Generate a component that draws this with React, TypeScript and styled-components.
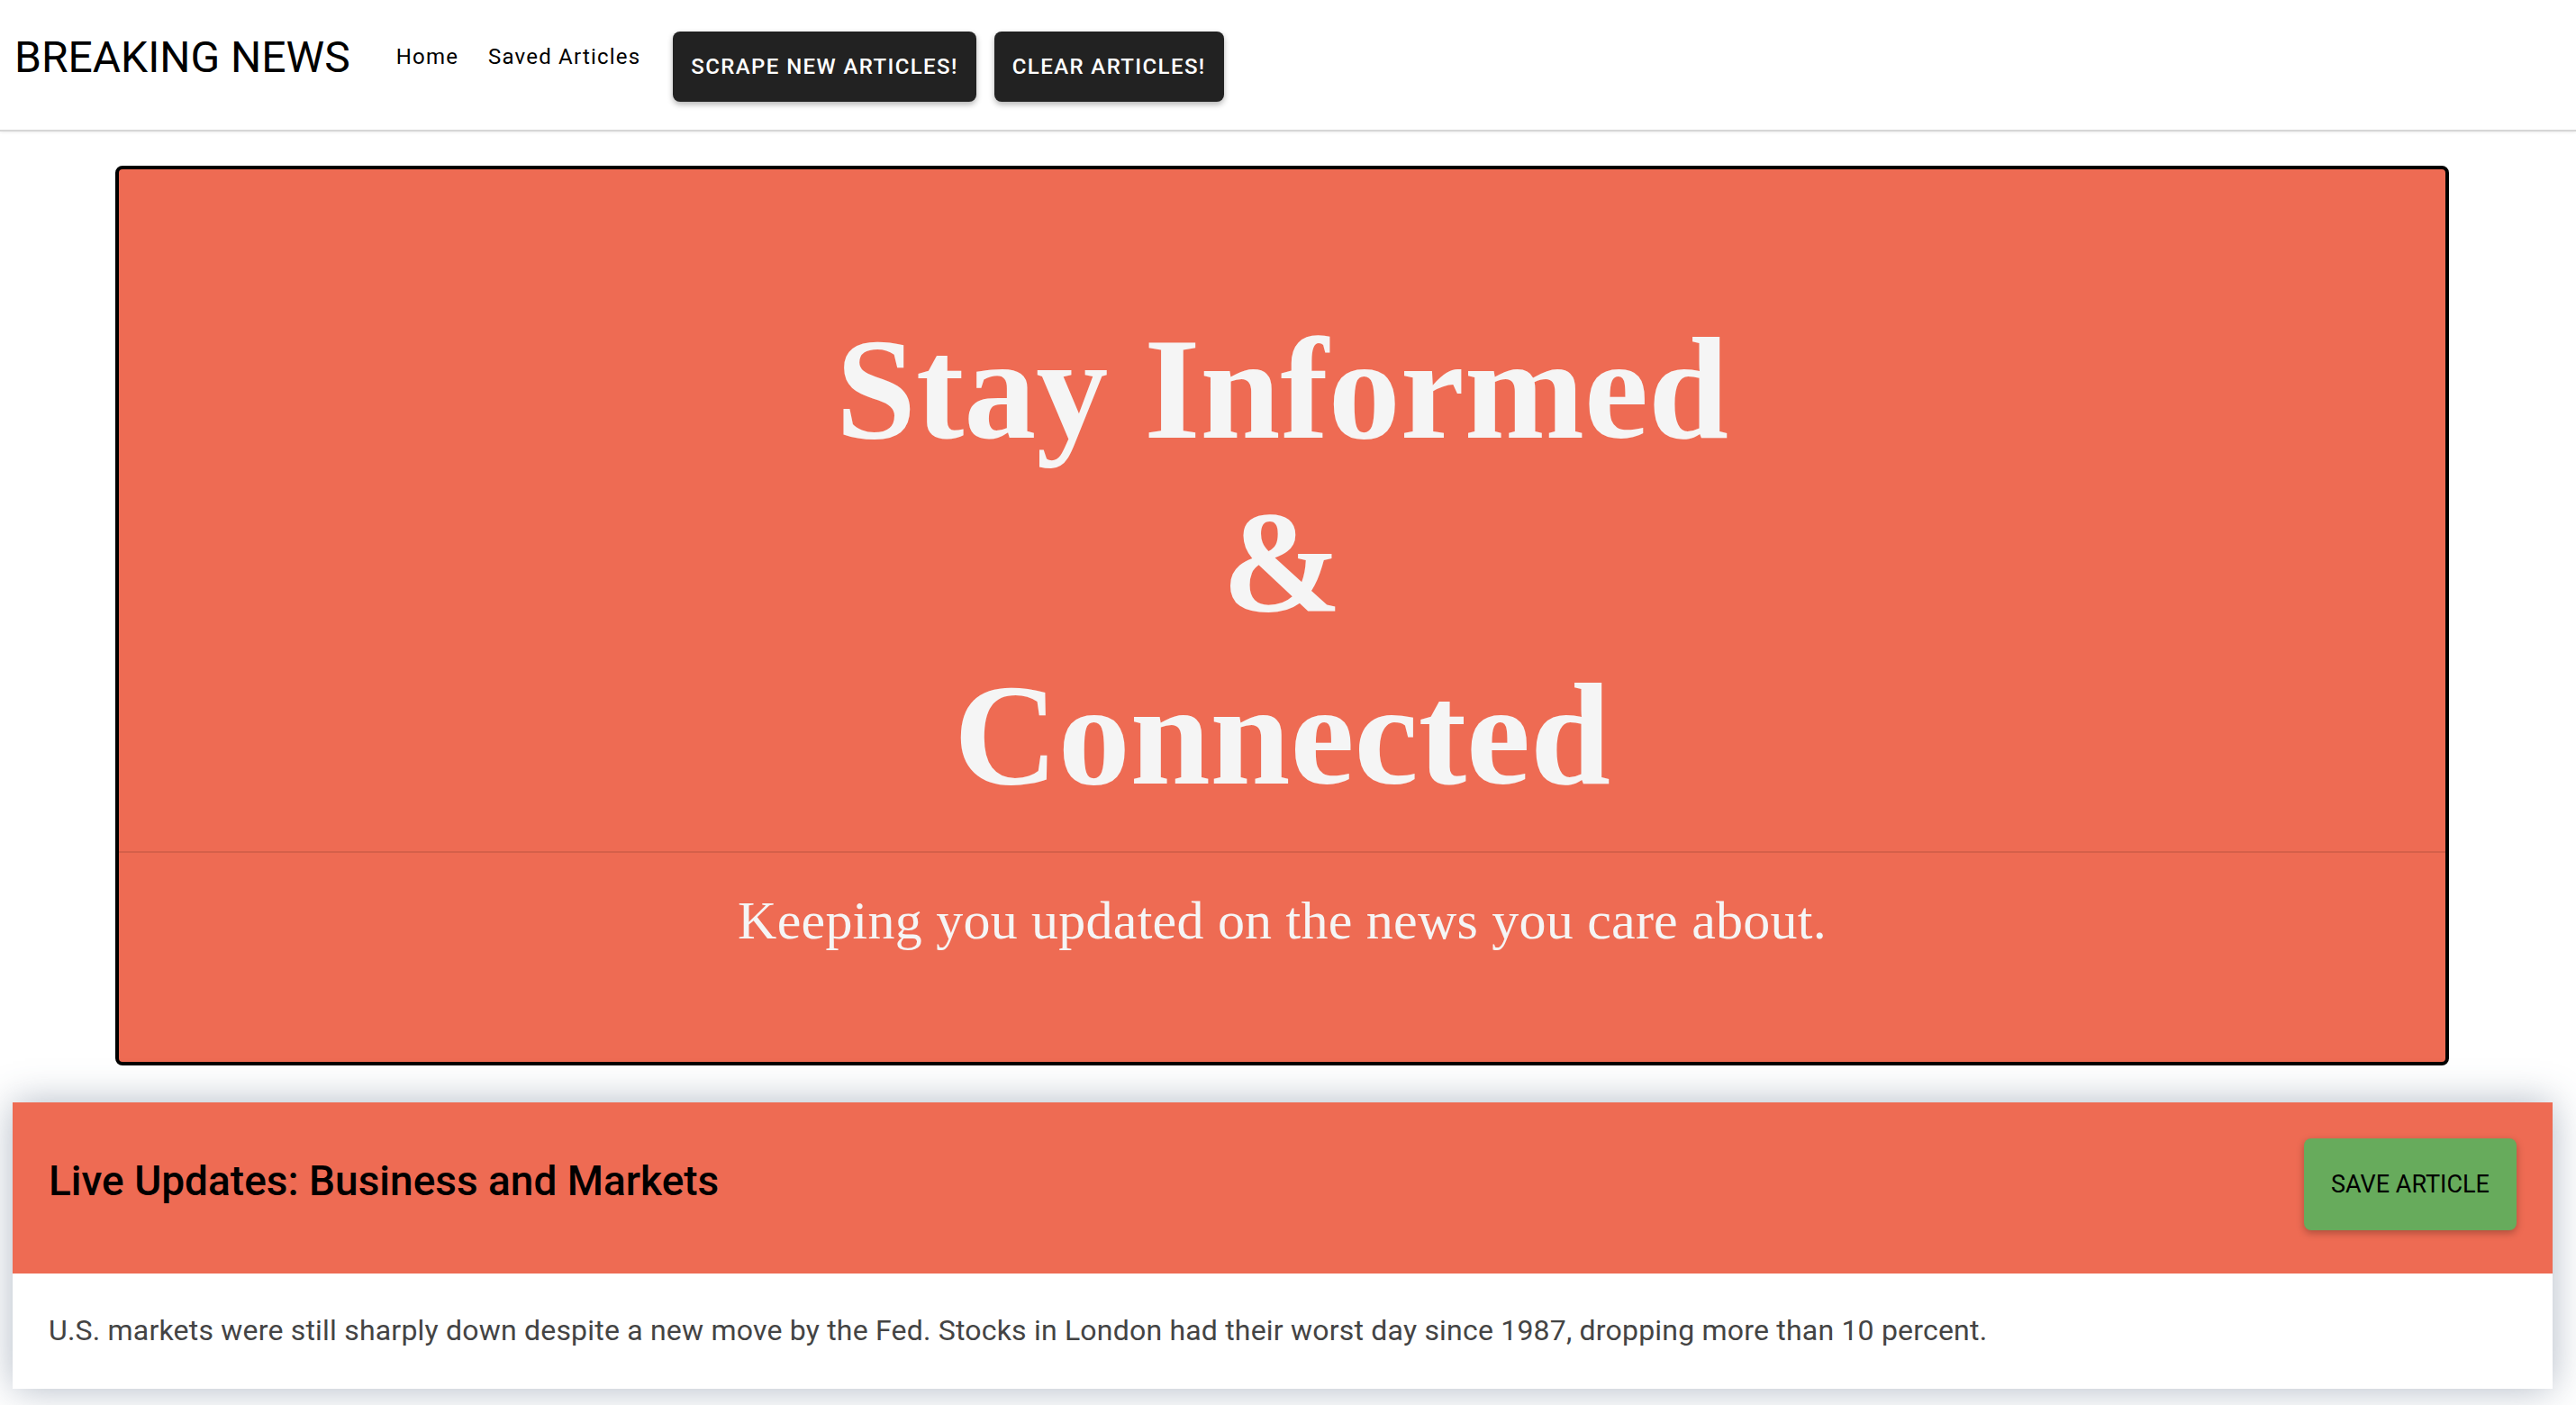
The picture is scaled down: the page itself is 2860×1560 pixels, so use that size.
import React from "react";
import styled, { createGlobalStyle } from "styled-components";

const Global = createGlobalStyle`
  html, body { margin: 0; padding: 0; background: #ffffff; }
  body { font-family: Roboto, "Liberation Sans", Arial, sans-serif; }
  * { box-sizing: border-box; }
`;

const NavBar = styled.nav`
  display: flex;
  align-items: center;
  height: 146px;
  padding: 0 0 18px 16px;
  border-bottom: 2px solid #d6d6d6;
  box-shadow: 0 1px 3px rgba(0, 0, 0, 0.08);
`;

const Brand = styled.a`
  font-family: Roboto, sans-serif;
  font-size: 48px;
  font-weight: 400;
  color: #000;
  text-decoration: none;
  margin-right: 51px;
`;

const NavLink = styled.a<{ $gap: number }>`
  font-family: Roboto, sans-serif;
  font-size: 24px;
  letter-spacing: 1.2px;
  color: #000;
  text-decoration: none;
  margin-right: ${(p) => p.$gap}px;
`;

const NavButton = styled.button<{ $gap: number }>`
  height: 78px;
  margin-top: 22px;
  margin-right: ${(p) => p.$gap}px;
  padding: 0 20px;
  border: none;
  border-radius: 8px;
  background: #222222;
  color: #ffffff;
  font-family: Roboto, sans-serif;
  font-size: 24px;
  font-weight: 500;
  letter-spacing: 1.4px;
  text-transform: uppercase;
  box-shadow: 0 3px 6px rgba(0, 0, 0, 0.3);
`;

const Main = styled.main`
  padding: 0 26px 20px 14px;
`;

const Jumbotron = styled.section`
  margin: 38px 115px 41px 114px;
  background: #ee6b53;
  border: 4px solid #000;
  border-radius: 8px;
  padding: 148px 0 112px;
  text-align: center;
  color: #f5f5f5;
`;

const HeroTitle = styled.h1`
  margin: 0;
  font-family: "Liberation Serif", "Times New Roman", serif;
  font-weight: 700;
  font-size: 160px;
  line-height: 192px;
`;

const Divider = styled.hr`
  margin: 33px 0 30px;
  border: none;
  height: 2px;
  background: rgba(0, 0, 0, 0.1);
`;

const Lead = styled.p`
  margin: 0;
  font-family: "Liberation Serif", "Times New Roman", serif;
  font-size: 60px;
  letter-spacing: 0.23px;
  line-height: 90px;
`;

const Card = styled.article`
  background: #fff;
  box-shadow: 0 0 40px rgba(60, 80, 110, 0.4);
`;

const CardHeader = styled.header`
  display: flex;
  align-items: center;
  justify-content: space-between;
  height: 190px;
  padding: 0 40px;
  background: #ee6b53;
`;

const CardTitle = styled.h2`
  margin: 0 0 16px;
  font-family: Roboto, sans-serif;
  font-weight: 500;
  font-size: 46px;
  color: #000;
`;

const SaveButton = styled.button`
  width: 236px;
  height: 102px;
  margin-bottom: 8px;
  border: none;
  border-radius: 8px;
  background: #67ab5c;
  color: #000;
  font-family: Roboto, sans-serif;
  font-size: 27px;
  font-weight: 400;
  text-transform: uppercase;
  box-shadow: 0 3px 8px rgba(0, 0, 0, 0.28);
`;

const CardBody = styled.div`
  padding: 40px 40px 42px;
`;

const Summary = styled.p`
  margin: 0;
  font-family: Roboto, sans-serif;
  font-size: 32px;
  letter-spacing: 0.2px;
  line-height: 46px;
  color: #444;
`;

export default function App() {
  return (
    <>
      <Global />
      <NavBar>
        <Brand href="#">BREAKING NEWS</Brand>
        <NavLink $gap={33} href="#">Home</NavLink>
        <NavLink $gap={36} href="#">Saved Articles</NavLink>
        <NavButton $gap={20}>Scrape New Articles!</NavButton>
        <NavButton $gap={0}>Clear Articles!</NavButton>
      </NavBar>
      <Main>
        <Jumbotron>
          <HeroTitle>
            Stay Informed
            <br />
            &amp;
            <br />
            Connected
          </HeroTitle>
          <Divider />
          <Lead>Keeping you updated on the news you care about.</Lead>
        </Jumbotron>
        <Card>
          <CardHeader>
            <CardTitle>Live Updates: Business and Markets</CardTitle>
            <SaveButton>Save Article</SaveButton>
          </CardHeader>
          <CardBody>
            <Summary>
              U.S. markets were still sharply down despite a new move by the Fed. Stocks in London had their worst day since 1987, dropping more than 10 percent.
            </Summary>
          </CardBody>
        </Card>
      </Main>
    </>
  );
}
